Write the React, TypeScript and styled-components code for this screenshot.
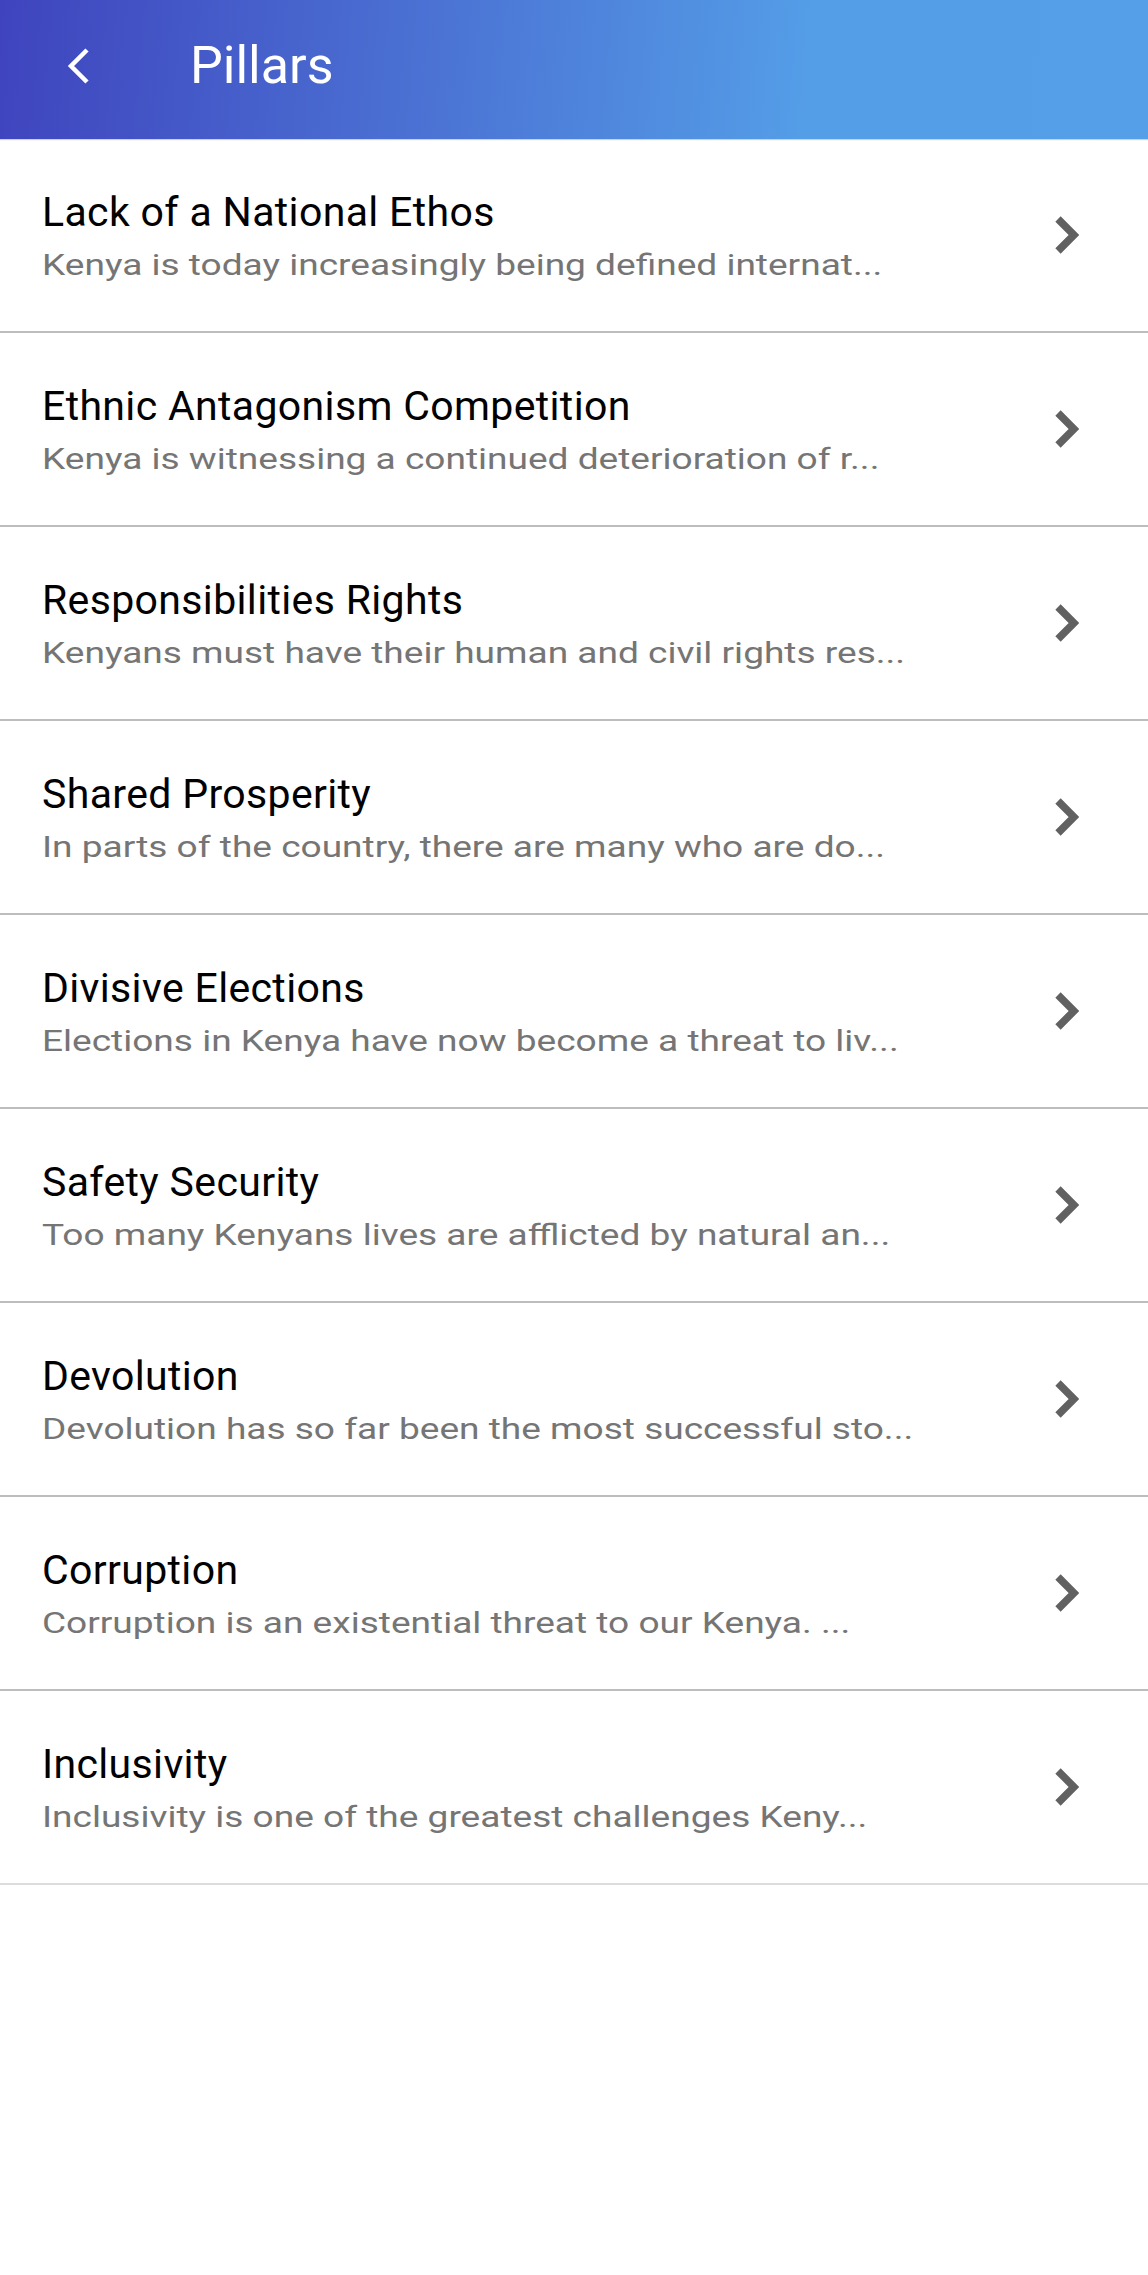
import React from "react";
import styled, { createGlobalStyle } from "styled-components";

const Global = createGlobalStyle`
  html, body { margin: 0; padding: 0; background: #ffffff; overflow-x: hidden; }
  body { font-family: Roboto, "Noto Sans", "Liberation Sans", sans-serif; }
`;

const Page = styled.div`
  width: 1148px;
  min-height: 2275px;
  background: #ffffff;
  display: flex;
  flex-direction: column;
  overflow: hidden;
`;

const AppBar = styled.header`
  height: 139px;
  box-sizing: border-box;
  padding: 0 0 7px 66px;
  display: flex;
  align-items: center;
  background: linear-gradient(95deg, #3f44be 0%, #4b73d4 38%, #549de7 70%, #549fe8 100%);
  box-shadow: 0 1px 1px rgba(0, 0, 0, 0.18);
  position: relative;
  z-index: 1;
`;

const BackButton = styled.button`
  width: 24px;
  height: 36px;
  padding: 0;
  margin: 0 100px 0 0;
  border: none;
  background: transparent;
  display: flex;
  align-items: center;
  justify-content: center;
  cursor: pointer;
`;

const Title = styled.h1`
  margin: 0;
  font-family: Roboto, "Noto Sans", sans-serif;
  font-weight: 400;
  font-size: 52px;
  line-height: 60px;
  color: #ffffff;
`;

const List = styled.ul`
  list-style: none;
  margin: 0;
  padding: 0;
`;

const Row = styled.li<{ $last?: boolean }>`
  height: 194px;
  box-sizing: border-box;
  border-bottom: 2px solid ${(p) => (p.$last ? "#dcdcdc" : "#bdbdc0")};
  display: flex;
  align-items: center;
  padding: 0 69px 0 42px;
`;

const TextBlock = styled.div`
  flex: 1;
  display: flex;
  flex-direction: column;
  align-items: flex-start;
  min-width: 0;
`;

const ItemTitle = styled.div`
  font-size: 41px;
  line-height: 48px;
  letter-spacing: 0.35px;
  color: #000000;
  white-space: nowrap;
`;

const ItemSubtitle = styled.div`
  margin-top: 11px;
  font-size: 30px;
  line-height: 36px;
  color: #757575;
  white-space: nowrap;
  transform: scaleX(1.235);
  transform-origin: left center;
`;

const Chevron = styled.svg`
  width: 24px;
  height: 38px;
  flex: none;
`;

const items = [
  ["Lack of a National Ethos", "Kenya is today increasingly being defined internat..."],
  ["Ethnic Antagonism Competition", "Kenya is witnessing a continued deterioration of r..."],
  ["Responsibilities Rights", "Kenyans must have their human and civil rights res..."],
  ["Shared Prosperity", "In parts of the country, there are many who are do..."],
  ["Divisive Elections", "Elections in Kenya have now become a threat to liv..."],
  ["Safety Security", "Too many Kenyans lives are afflicted by natural an..."],
  ["Devolution", "Devolution has so far been the most successful sto..."],
  ["Corruption", "Corruption is an existential threat to our Kenya. ..."],
  ["Inclusivity", "Inclusivity is one of the greatest challenges Keny..."],
];

export default function App() {
  return (
    <Page>
      <Global />
      <AppBar>
        <BackButton aria-label="Back">
          <svg width="24" height="36" viewBox="0 0 24 36">
            <path d="M21 2 L5 18 L21 34" fill="none" stroke="#ffffff" strokeWidth="4.5" />
          </svg>
        </BackButton>
        <Title>Pillars</Title>
      </AppBar>
      <List>
        {items.map(([t, s], i) => (
          <Row key={t} $last={i === items.length - 1}>
            <TextBlock>
              <ItemTitle>{t}</ItemTitle>
              <ItemSubtitle>{s}</ItemSubtitle>
            </TextBlock>
            <Chevron viewBox="0 0 24 38">
              <path d="M3 3 L19 19 L3 35" fill="none" stroke="#616161" strokeWidth="7.5" />
            </Chevron>
          </Row>
        ))}
      </List>
    </Page>
  );
}
